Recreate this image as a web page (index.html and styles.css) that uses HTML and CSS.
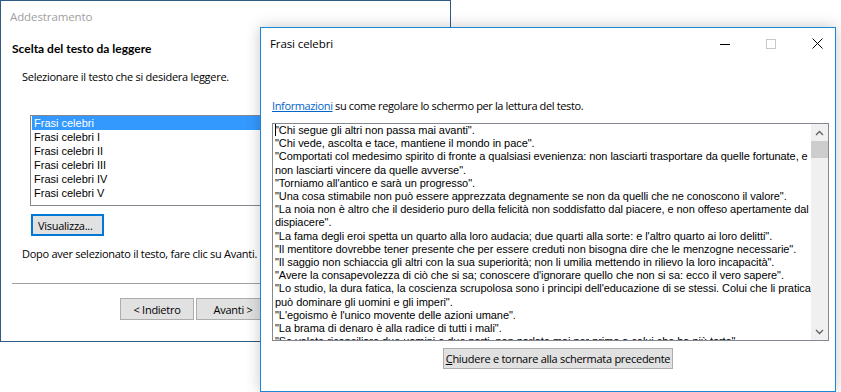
FILE: index.html
```html
<!DOCTYPE html>
<html lang="it">
<head>
    <meta charset="UTF-8">
    <title>Addestramento</title>
    <link rel="stylesheet" href="styles.css">
</head>
<body>
    <div class="desktop">
        <div class="window wizard">
            <div class="titlebar inactive">Addestramento</div>
            <div class="wiz-head">Scelta del testo da leggere</div>
            <div class="wiz-text">Selezionare il testo che si desidera leggere.</div>
            <div class="listbox">
                <div class="item selected">Frasi celebri</div>
                <div class="item">Frasi celebri I</div>
                <div class="item">Frasi celebri II</div>
                <div class="item">Frasi celebri III</div>
                <div class="item">Frasi celebri IV</div>
                <div class="item">Frasi celebri V</div>
            </div>
            <button class="btn focused show-btn">Visualizza...</button>
            <div class="wiz-text after">Dopo aver selezionato il testo, fare clic su Avanti.</div>
            <div class="separator"></div>
            <div class="wiz-buttons">
                <button class="btn nav-btn">&lt; Indietro</button>
                <button class="btn nav-btn">Avanti &gt;</button>
            </div>
        </div>

        <div class="window reader">
            <div class="titlebar">
                <span class="title">Frasi celebri</span>
                <div class="controls">
                    <span class="ctl"><svg width="10" height="10" viewBox="0 0 10 10"><path d="M0 5.5h10" stroke="#000" stroke-width="1"/></svg></span>
                    <span class="ctl"><svg width="10" height="10" viewBox="0 0 10 10"><rect x="0.5" y="0.5" width="9" height="9" fill="none" stroke="#c8c8c8" stroke-width="1"/></svg></span>
                    <span class="ctl"><svg width="11" height="11" viewBox="0 0 11 11"><path d="M0.5 0.5l10 10M10.5 0.5l-10 10" stroke="#000" stroke-width="1"/></svg></span>
                </div>
            </div>
            <div class="info"><a href="#" class="link">Informazioni</a> su come regolare lo schermo per la lettura del testo.</div>
            <div class="textbox">
                <div class="text"><span class="caret"></span>"Chi segue gli altri non passa mai avanti".
"Chi vede, ascolta e tace, mantiene il mondo in pace".
"Comportati col medesimo spirito di fronte a qualsiasi evenienza: non lasciarti trasportare da quelle fortunate, e
non lasciarti vincere da quelle avverse".
"Torniamo all'antico e sarà un progresso".
"Una cosa stimabile non può essere apprezzata degnamente se non da quelli che ne conoscono il valore".
"La noia non è altro che il desiderio puro della felicità non soddisfatto dal piacere, e non offeso apertamente dal
dispiacere".
"La fama degli eroi spetta un quarto alla loro audacia; due quarti alla sorte: e l'altro quarto ai loro delitti".
"Il mentitore dovrebbe tener presente che per essere creduti non bisogna dire che le menzogne necessarie".
"Il saggio non schiaccia gli altri con la sua superiorità; non li umilia mettendo in rilievo la loro incapacità".
"Avere la consapevolezza di ciò che si sa; conoscere d'ignorare quello che non si sa: ecco il vero sapere".
"Lo studio, la dura fatica, la coscienza scrupolosa sono i principi dell'educazione di se stessi. Colui che li pratica
può dominare gli uomini e gli imperi".
"L'egoismo è l'unico movente delle azioni umane".
"La brama di denaro è alla radice di tutti i mali".
"Se volete riconciliare due uomini o due parti, non parlate mai per primo a colui che ha più torto".</div>
                <div class="scrollbar">
                    <span class="arrow"><svg width="9" height="6" viewBox="0 0 9 6"><path d="M1 5l3.5-3.5L8 5" fill="none" stroke="#606060" stroke-width="1.3"/></svg></span>
                    <span class="thumb"></span>
                    <span class="track"></span>
                    <span class="arrow"><svg width="9" height="6" viewBox="0 0 9 6"><path d="M1 1l3.5 3.5L8 1" fill="none" stroke="#606060" stroke-width="1.3"/></svg></span>
                </div>
            </div>
            <button class="btn close-btn"><u>C</u>hiudere e tornare alla schermata precedente</button>
        </div>
    </div>
</body>
</html>
```

FILE: styles.css
```css
body { margin: 0; background: #fff; font-family: "Open Sans", "Noto Sans", sans-serif; font-size: 11px; letter-spacing: -0.27px; color: #000; }
.desktop { position: relative; width: 841px; height: 392px; overflow: hidden; }
.window { position: absolute; background: #fff; box-sizing: border-box; display: flex; flex-direction: column; }

.wizard { left: 0; top: 0; width: 451px; height: 342px; border: 1px solid #2f5b82; }
.reader { left: 260px; top: 27px; width: 576px; height: 365px; border: 1px solid #1c86d6; box-shadow: 0 0 14px rgba(0, 0, 0, 0.22); }

.titlebar { height: 30px; display: flex; align-items: center; padding-left: 9px; font-size: 11.5px; letter-spacing: -0.1px; flex-shrink: 0; }
.titlebar.inactive { color: #a0a0a0; }
.reader .titlebar { height: 31px; padding-left: 9px; }
.title { flex: 1; }
.controls { display: flex; height: 100%; margin-right: -5px; }
.ctl { width: 46px; display: flex; align-items: center; justify-content: center; }

.wiz-head { margin: 8px 0 0 11px; line-height: 20px; font-family: Lato, sans-serif; font-weight: bold; font-size: 12px; letter-spacing: 0; }
.wiz-text { margin: 10px 0 0 21px; line-height: 16px; }
.wiz-text.after { margin-top: 10px; }

.listbox { margin: 30px 0 0 29px; width: 390px; height: 91px; box-sizing: border-box; border: 1px solid #828790; padding: 0 1px; font-family: "Liberation Sans", sans-serif; font-size: 11px; letter-spacing: 0; }
.item { height: 14px; line-height: 14px; padding-left: 2px; }
.item.selected { background: #3399ff; color: #fff; }

.btn { font-family: "Open Sans", "Noto Sans", sans-serif; font-size: 11px; letter-spacing: -0.27px; background: #e1e1e1; border: 1px solid #adadad; color: #000; padding: 0; box-sizing: border-box; white-space: nowrap; }
.btn.focused { border: 2px solid #0078d7; }
.show-btn { margin: 8px 0 0 30px; width: 73px; height: 22px; text-align: left; padding-left: 5px; }

.separator { margin: 21px 12px 0 11px; height: 1px; background: #a0a0a0; }
.wiz-buttons { display: flex; gap: 2px; margin: 14px 0 0 119px; }
.nav-btn { width: 74px; height: 22px; }

.info { margin: 39px 0 0 11px; line-height: 16px; letter-spacing: -0.37px; }
.link { color: #0066cc; }

.textbox { margin: 9px 0 0 11px; width: 557px; height: 218px; box-sizing: border-box; border: 1px solid #828790; display: flex; overflow: hidden; }
.text { flex: 1; overflow: hidden; white-space: pre; padding: 0 0 0 2px; line-height: 13.2px; font-family: "Liberation Sans", sans-serif; font-size: 11px; letter-spacing: -0.06px; }
.caret { display: inline-block; width: 1px; height: 12px; background: #000; vertical-align: -2px; margin-right: -1px; }
.scrollbar { width: 17px; background: #f0f0f0; display: flex; flex-direction: column; }
.arrow { height: 17px; display: flex; align-items: center; justify-content: center; }
.thumb { height: 17px; background: #cdcdcd; }
.track { flex: 1; }

.close-btn { margin: 7px 0 0 182px; width: 230px; height: 21px; }
```
